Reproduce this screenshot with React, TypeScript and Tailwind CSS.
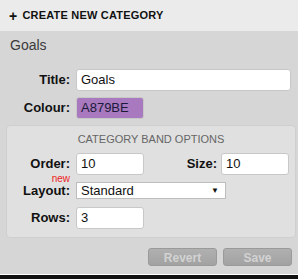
import React from "react";

const Label = ({ children, w = "w-[70px]" }: { children: React.ReactNode; w?: string }) => (
  <span className={`${w} shrink-0 text-right text-[13px] font-bold text-[#111]`}>{children}</span>
);

const Field = ({ value, className = "" }: { value: string; className?: string }) => (
  <div
    className={`h-[22px] flex items-center px-[4px] bg-white border border-[#c8c8c8] rounded-[3px] text-[13px] text-[#111] ${className}`}
  >
    {value}
  </div>
);

export default function App() {
  return (
    <div
      className="w-[298px] h-[279px] flex flex-col bg-[#111] overflow-hidden"
      style={{ fontFamily: '"Liberation Sans", Arial, sans-serif' }}
    >
      <div className="h-[31px] shrink-0 bg-[#ebebeb] flex items-center gap-[5px] pl-[9px] text-[11px] font-bold text-[#111] tracking-[0.2px]">
        <span className="text-[14px] leading-none">+</span>
        <span>CREATE NEW CATEGORY</span>
      </div>

      <div className="h-[244px] shrink-0 bg-[#d6d6d6] flex flex-col border-b border-white">
        <div className="pl-[10px] pt-[6px] text-[14px] leading-[16px] text-[#3a3a3a]">Goals</div>

        <div className="flex items-center gap-[6px] mt-[16px]">
          <Label>Title:</Label>
          <Field value="Goals" className="w-[215px]" />
        </div>
        <div className="flex items-center gap-[6px] mt-[6px]">
          <Label>Colour:</Label>
          <Field value="A879BE" className="w-[68px] !bg-[#a879be] !text-[#1a1a3a]" />
        </div>

        <div className="ml-[6px] mr-[2px] mt-[6px] h-[113px] bg-[#e0e0e0] border border-[#cfcfcf] rounded-[4px] flex flex-col">
          <div className="pt-[7px] text-center text-[11px] leading-[13px] text-[#666]">CATEGORY BAND OPTIONS</div>

          <div className="flex items-center gap-[6px] mt-[7px]">
            <Label w="w-[63px]">Order:</Label>
            <Field value="10" className="w-[68px]" />
            <span className="flex-1" />
            <Label w="w-auto">Size:</Label>
            <Field value="10" className="w-[68px] mr-[6px] -ml-[2px]" />
          </div>

          <div className="flex items-center gap-[6px] mt-[7px]">
            <span className="relative w-[63px] shrink-0 text-right text-[13px] leading-[15px] font-bold text-[#111]">
              <span className="absolute right-0 -top-[8px] text-[10px] font-normal leading-[8px] text-[#ee2222]">new</span>
              Layout:
            </span>
            <div className="w-[150px] h-[17px] flex items-center justify-between pl-[4px] pr-[6px] bg-white border border-[#bdbdbd] text-[13px] text-[#111]">
              <span>Standard</span>
              <span className="text-[8px]">▼</span>
            </div>
          </div>

          <div className="flex items-center gap-[6px] mt-[8px]">
            <Label w="w-[63px]">Rows:</Label>
            <Field value="3" className="w-[68px]" />
          </div>
        </div>

        <div className="flex justify-end gap-[6px] mt-[10px] pr-[6px]">
          <button className="w-[69px] h-[18px] rounded-[3px] border border-[#9a9a9a] bg-gradient-to-b from-[#b0b0b0] to-[#a2a2a2] text-[12px] font-bold text-[#d2d2d2]">
            Revert
          </button>
          <button className="w-[69px] h-[18px] rounded-[3px] border border-[#9a9a9a] bg-gradient-to-b from-[#b0b0b0] to-[#a2a2a2] text-[12px] font-bold text-[#d2d2d2]">
            Save
          </button>
        </div>
      </div>
    </div>
  );
}
